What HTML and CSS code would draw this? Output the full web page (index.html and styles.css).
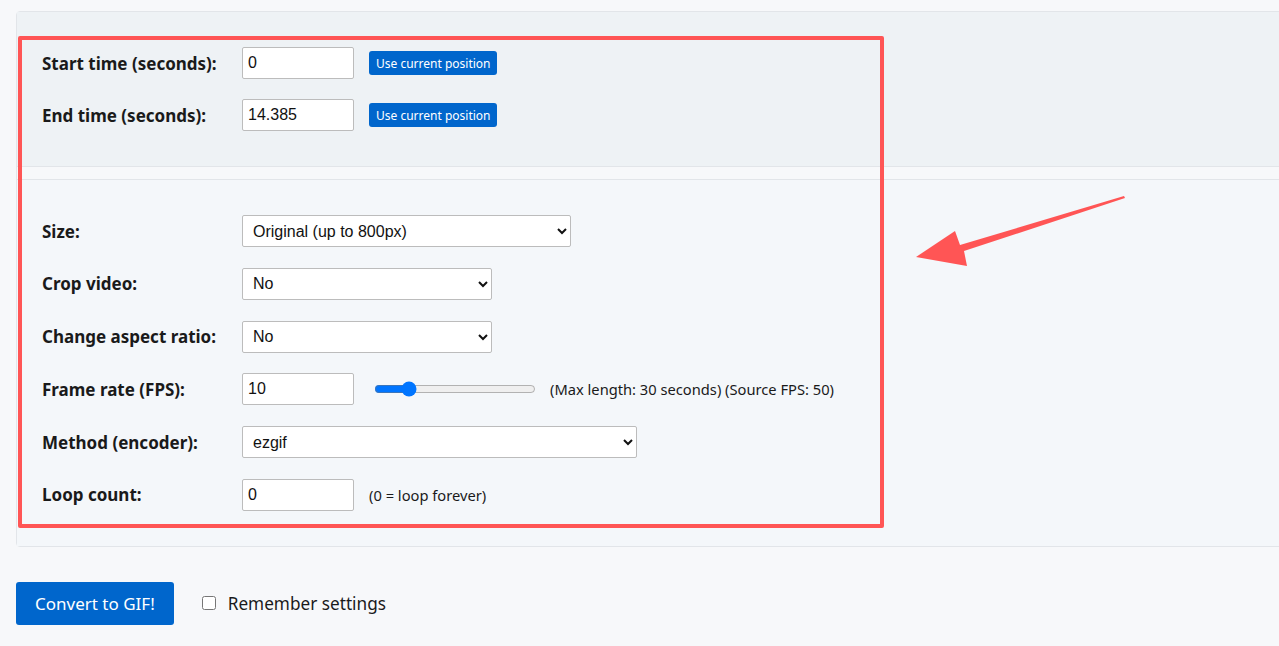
FILE: index.html
```html
<!DOCTYPE html>
<html lang="en">
<head>
  <meta charset="UTF-8">
  <title>Video to GIF</title>
  <link rel="stylesheet" href="styles.css">
</head>
<body>
  <div class="panel">
    <div class="panel-top">
      <div class="row">
        <label class="label">Start time (seconds):</label>
        <input class="field short" type="text" value="0">
        <button class="small-btn">Use current position</button>
      </div>
      <div class="row">
        <label class="label">End time (seconds):</label>
        <input class="field short" type="text" value="14.385">
        <button class="small-btn">Use current position</button>
      </div>
    </div>
    <div class="panel-gap"></div>
    <div class="panel-body">
      <div class="row">
        <label class="label">Size:</label>
        <select class="field size-select">
          <option>Original (up to 800px)</option>
        </select>
      </div>
      <div class="row">
        <label class="label">Crop video:</label>
        <select class="field mid-select">
          <option>No</option>
        </select>
      </div>
      <div class="row">
        <label class="label">Change aspect ratio:</label>
        <select class="field mid-select">
          <option>No</option>
        </select>
      </div>
      <div class="row">
        <label class="label">Frame rate (FPS):</label>
        <input class="field short" type="text" value="10">
        <input class="fps-range" type="range" min="1" max="50" value="10">
        <span class="hint">(Max length: 30 seconds) (Source FPS: 50)</span>
      </div>
      <div class="row">
        <label class="label">Method (encoder):</label>
        <select class="field wide-select">
          <option>ezgif</option>
        </select>
      </div>
      <div class="row">
        <label class="label">Loop count:</label>
        <input class="field short" type="text" value="0">
        <span class="hint">(0 = loop forever)</span>
      </div>
    </div>
  </div>

  <div class="actions">
    <button class="convert-btn">Convert to GIF!</button>
    <label class="remember"><input type="checkbox"> Remember settings</label>
  </div>

  <!-- highlight box and arrow drawn over the form -->
  <div class="highlight"></div>
  <svg class="arrow" width="220" height="80" viewBox="0 0 220 80">
    <path d="M208 3 L209 5 L48 58 L51 73 L0 64 L39 38 L44 52 Z" fill="#ff5555"/>
  </svg>
</body>
</html>
```

FILE: styles.css
```css
body {
  margin: 0;
  padding: 11px 0 0 16px;
  background: #f7f8fa;
  font-family: "Noto Sans", "Open Sans", Arial, sans-serif;
  color: #1a1a1a;
  overflow: hidden;
}
.panel {
  margin-right: -20px;
  border: 1px solid #e2e5e9;
  border-radius: 4px 0 0 4px;
  background: #f7f8fa;
}
.panel-top {
  background: #eef2f5;
  padding: 35px 0 35px 25px;
  border-bottom: 1px solid #e2e5e9;
  display: flex;
  flex-direction: column;
  gap: 20px;
}
.panel-gap {
  height: 12px;
  border-bottom: 1px solid #e2e5e9;
}
.panel-body {
  background: #f4f7fa;
  padding: 35px 0 35px 25px;
  display: flex;
  flex-direction: column;
  gap: 20.8px;
}
.row {
  display: flex;
  align-items: center;
  height: 32px;
}
.label {
  width: 200px;
  font-weight: bold;
  font-size: 17px;
}
.field {
  box-sizing: border-box;
  height: 32px;
  border: 1px solid #bcbcbc;
  border-radius: 2px;
  background: #fff;
  font-family: "Liberation Sans", Arial, sans-serif;
  font-size: 16px;
  color: #111;
  padding: 0 5px;
}
.short {
  width: 112px;
}
.size-select {
  width: 329px;
  padding-left: 6px;
}
.mid-select {
  width: 250px;
  padding-left: 6px;
}
.wide-select {
  width: 395px;
  padding-left: 6px;
}
.small-btn {
  margin-left: 15px;
  height: 24px;
  padding: 0 7px;
  border: none;
  border-radius: 3px;
  background: #0066cc;
  color: #fff;
  font-family: "Noto Sans", Arial, sans-serif;
  font-size: 12px;
}
.fps-range {
  width: 162px;
  margin: 0 0 0 20px;
  accent-color: #0075ff;
}
.hint {
  margin-left: 15px;
  font-size: 14.7px;
}
.fps-range + .hint {
  margin-left: 14px;
}
.actions {
  display: flex;
  align-items: center;
  margin-top: 35px;
}
.convert-btn {
  height: 43px;
  padding: 0 19px;
  border: none;
  border-radius: 3px;
  background: #0066cc;
  color: #fff;
  font-family: "Noto Sans", Arial, sans-serif;
  font-size: 17px;
}
.remember {
  margin-left: 28px;
  display: flex;
  align-items: center;
  gap: 12px;
  font-size: 17.2px;
}
.remember input {
  margin: 0;
  width: 14px;
  height: 14px;
}
.highlight {
  position: absolute;
  left: 18px;
  top: 36px;
  width: 858px;
  height: 484px;
  border: 4px solid #ff5555;
  border-radius: 2px;
}
.arrow {
  position: absolute;
  left: 916px;
  top: 193px;
}
```
